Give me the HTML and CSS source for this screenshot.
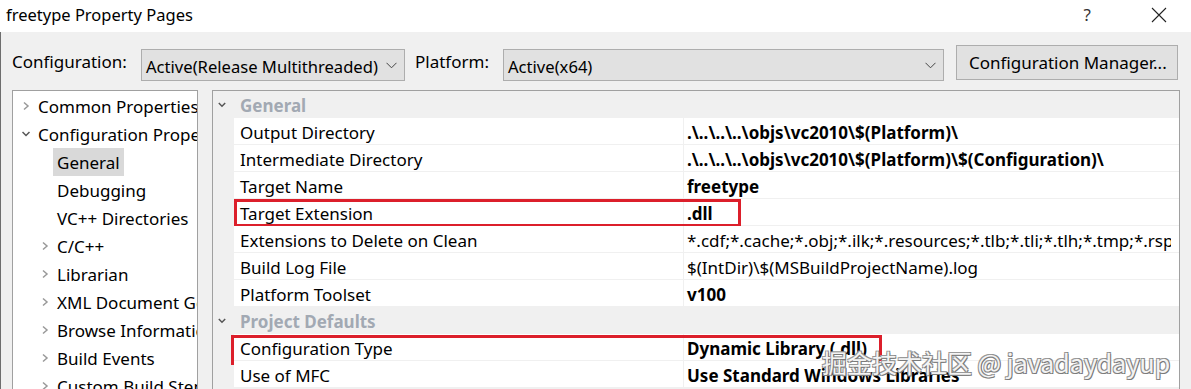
FILE: index.html
```html
<!DOCTYPE html>
<html lang="en">
<head>
<meta charset="utf-8">
<title>freetype Property Pages</title>
<link rel="stylesheet" href="styles.css">
</head>
<body>
<div class="titlebar">
  <span class="title">freetype Property Pages</span>
  <span class="tb-help">?</span>
  <span class="tb-close"><svg width="16" height="16" viewBox="0 0 16 16"><path d="M1 1 L15 15 M15 1 L1 15" stroke="#222" stroke-width="1.1" fill="none"/></svg></span>
</div>
<div class="window">
  <div class="toolbar">
    <span class="label label-config">Configuration:</span>
    <div class="combo combo-config"><span class="combo-text">Active(Release Multithreaded)</span><svg class="combo-chev" width="11" height="7" viewBox="0 0 11 7"><path d="M0.5 0.8 L5.5 5.8 L10.5 0.8" stroke="#444" stroke-width="1" fill="none"/></svg></div>
    <span class="label label-platform">Platform:</span>
    <div class="combo combo-platform"><span class="combo-text">Active(x64)</span><svg class="combo-chev" width="11" height="7" viewBox="0 0 11 7"><path d="M0.5 0.8 L5.5 5.8 L10.5 0.8" stroke="#444" stroke-width="1" fill="none"/></svg></div>
    <button class="btn">Configuration Manager...</button>
  </div>
  <div class="panels">
    <div class="tree">
      <div class="tree-row lvl0"><svg class="chev" width="8" height="10" viewBox="0 0 8 10"><path d="M2 1.5 L6 5 L2 8.5" stroke="#999" stroke-width="1.5" fill="none"/></svg><span>Common Properties</span></div>
      <div class="tree-row lvl0"><svg class="chev" width="8" height="10" viewBox="0 0 8 10"><path d="M0.5 3 L4 6.5 L7.5 3" stroke="#555" stroke-width="1.5" fill="none"/></svg><span>Configuration Properties</span></div>
      <div class="tree-row lvl1"><span class="chev-space"></span><span class="selected">General</span></div>
      <div class="tree-row lvl1"><span class="chev-space"></span><span>Debugging</span></div>
      <div class="tree-row lvl1"><span class="chev-space"></span><span>VC++ Directories</span></div>
      <div class="tree-row lvl1"><svg class="chev" width="8" height="10" viewBox="0 0 8 10"><path d="M2 1.5 L6 5 L2 8.5" stroke="#999" stroke-width="1.5" fill="none"/></svg><span>C/C++</span></div>
      <div class="tree-row lvl1"><svg class="chev" width="8" height="10" viewBox="0 0 8 10"><path d="M2 1.5 L6 5 L2 8.5" stroke="#999" stroke-width="1.5" fill="none"/></svg><span>Librarian</span></div>
      <div class="tree-row lvl1"><svg class="chev" width="8" height="10" viewBox="0 0 8 10"><path d="M2 1.5 L6 5 L2 8.5" stroke="#999" stroke-width="1.5" fill="none"/></svg><span>XML Document Generator</span></div>
      <div class="tree-row lvl1"><svg class="chev" width="8" height="10" viewBox="0 0 8 10"><path d="M2 1.5 L6 5 L2 8.5" stroke="#999" stroke-width="1.5" fill="none"/></svg><span>Browse Information</span></div>
      <div class="tree-row lvl1"><svg class="chev" width="8" height="10" viewBox="0 0 8 10"><path d="M2 1.5 L6 5 L2 8.5" stroke="#999" stroke-width="1.5" fill="none"/></svg><span>Build Events</span></div>
      <div class="tree-row lvl1"><svg class="chev" width="8" height="10" viewBox="0 0 8 10"><path d="M2 1.5 L6 5 L2 8.5" stroke="#999" stroke-width="1.5" fill="none"/></svg><span>Custom Build Step</span></div>
    </div>
    <div class="grid">
      <div class="cat"><svg class="cat-chev" width="8" height="8" viewBox="0 0 8 8"><path d="M0.8 2 L4 5.2 L7.2 2" stroke="#555" stroke-width="1.5" fill="none"/></svg><span>General</span></div>
      <div class="prop"><div class="name">Output Directory</div><div class="value bold">.\..\..\..\objs\vc2010\$(Platform)\</div></div>
      <div class="prop"><div class="name">Intermediate Directory</div><div class="value bold">.\..\..\..\objs\vc2010\$(Platform)\$(Configuration)\</div></div>
      <div class="prop"><div class="name">Target Name</div><div class="value bold">freetype</div></div>
      <div class="prop"><div class="name">Target Extension</div><div class="value bold">.dll</div><span class="mark mark-ext"></span></div>
      <div class="prop"><div class="name">Extensions to Delete on Clean</div><div class="value">*.cdf;*.cache;*.obj;*.ilk;*.resources;*.tlb;*.tli;*.tlh;*.tmp;*.rsp;*.pgc;*.pgd;*.meta;*.tlog;*.manifest;*.res;*.pch;*.exp;*.idb;*.rep;*.xdc;*.pdb;*_manifest.rc;*.bsc;*.sbr;*.xml;*.metagen;*.bi</div></div>
      <div class="prop"><div class="name">Build Log File</div><div class="value">$(IntDir)\$(MSBuildProjectName).log</div></div>
      <div class="prop"><div class="name">Platform Toolset</div><div class="value bold">v100</div></div>
      <div class="cat"><svg class="cat-chev" width="8" height="8" viewBox="0 0 8 8"><path d="M0.8 2 L4 5.2 L7.2 2" stroke="#555" stroke-width="1.5" fill="none"/></svg><span>Project Defaults</span></div>
      <div class="prop"><div class="name">Configuration Type</div><div class="value bold">Dynamic Library (.dll)</div><span class="mark mark-type"></span></div>
      <div class="prop"><div class="name">Use of MFC</div><div class="value bold">Use Standard Windows Libraries</div></div>
    </div>
  </div>
</div>
<div class="watermark">掘金技术社区 @ javadaydayup</div>
</body>
</html>
```

FILE: styles.css
```css
html, body {
  margin: 0;
  padding: 0;
}
body {
  width: 1191px;
  height: 389px;
  overflow: hidden;
  background: #f0f0f0;
  font-family: "Noto Sans", "Open Sans", sans-serif;
  font-size: 17px;
  color: #000;
  position: relative;
}
.titlebar {
  height: 32px;
  background: #fff;
  display: flex;
  align-items: center;
}
.title {
  margin-left: 6px;
  margin-top: -3px;
  font-size: 16.5px;
  color: #000;
}
.tb-help {
  margin-left: auto;
  margin-top: -3px;
  font-size: 17px;
  color: #333;
  margin-right: 60px;
}
.tb-close {
  display: flex;
  margin-top: -3px;
  margin-right: 24px;
}
.window {
  border-left: 1px solid #6e6e6e;
  height: 357px;
}
.toolbar {
  box-sizing: border-box;
  height: 58px;
  padding: 13px 0 0 11px;
  display: flex;
  align-items: flex-start;
}
.label {
  font-size: 17px;
  margin-top: 5px;
  line-height: 24px;
  white-space: nowrap;
}
.label-config {
  width: 129px;
}
.label-platform {
  width: 88px;
  margin-left: 10px;
}
.combo {
  margin-top: 4px;
  height: 32px;
  box-sizing: border-box;
  border: 1px solid #adadad;
  background: #e1e1e1;
  display: flex;
  align-items: center;
  padding: 3px 7px 0 4px;
  font-size: 16.6px;
}
.combo-text {
  flex: 1;
  white-space: nowrap;
}
.combo-chev {
  margin-top: -2px;
}
.combo-config {
  width: 264px;
}
.combo-platform {
  width: 441px;
}
.btn {
  margin-left: 12px;
  width: 222px;
  height: 35px;
  box-sizing: border-box;
  border: 1px solid #adadad;
  background: #e1e1e1;
  font-family: inherit;
  font-size: 17px;
  color: #000;
  padding: 0 0 0 12px;
  text-align: left;
}
.panels {
  display: flex;
  gap: 14px;
  padding-left: 11px;
}
.tree {
  width: 186px;
  height: 310px;
  box-sizing: border-box;
  border: 1px solid #a0a0a0;
  border-bottom: none;
  background: #fff;
  padding-top: 1px;
  overflow: hidden;
  flex: none;
}
.tree-row {
  height: 28px;
  display: flex;
  align-items: center;
  white-space: nowrap;
  font-size: 17px;
}
.tree-row > span:last-child {
  padding-top: 1px;
}
.lvl0 {
  padding-left: 9px;
}
.lvl1 {
  padding-left: 28px;
}
.chev, .chev-space {
  width: 8px;
  flex: none;
  margin-right: 8px;
}
.selected {
  background: #d9d9d9;
  margin-left: -4px;
  padding: 0 4px;
  line-height: 27px;
}
.grid {
  flex: none;
  width: 968px;
  height: 310px;
  box-sizing: border-box;
  border: 1px solid #a0a0a0;
  border-bottom: none;
  background: #f0f0f0;
  overflow: hidden;
}
.cat {
  height: 27px;
  display: flex;
  align-items: center;
  font-weight: 700;
  color: #a2a9b3;
  font-size: 17px;
}
.cat span {
  padding-top: 2px;
}
.cat-chev {
  margin-left: 5px;
  margin-right: 14px;
}
.prop {
  position: relative;
  display: flex;
  margin-left: 21px;
  height: 27px;
  box-sizing: border-box;
  background: #fff;
  border-bottom: 1px solid #f0f0f0;
  align-items: stretch;
  font-size: 17px;
}
.name {
  width: 450px;
  box-sizing: border-box;
  padding: 2px 0 0 6px;
  border-right: 1px solid #f0f0f0;
  display: flex;
  align-items: center;
  white-space: nowrap;
}
.value {
  flex: 1;
  padding: 2px 0 0 3px;
  display: flex;
  align-items: center;
  white-space: nowrap;
  overflow: hidden;
  margin-right: 8px;
}
.bold {
  font-weight: 700;
}
.mark {
  position: absolute;
  border: 3px solid #dc1f2b;
  box-sizing: border-box;
  pointer-events: none;
}
.mark-ext {
  left: 0;
  top: 0;
  width: 507px;
  height: 28px;
}
.mark-type {
  left: -3px;
  top: 1px;
  width: 651px;
  height: 30px;
}
.watermark {
  position: absolute;
  left: 822px;
  top: 346px;
  font-family: "Noto Sans CJK SC", "Noto Sans", sans-serif;
  font-size: 25px;
  line-height: 32px;
  white-space: nowrap;
  color: rgba(255, 255, 255, 0.92);
  text-shadow: 1px 1px 0 #7a7a7a, -1px -1px 0 #9a9a9a, 1px -1px 0 #8a8a8a, -1px 1px 0 #8a8a8a;
}
```
